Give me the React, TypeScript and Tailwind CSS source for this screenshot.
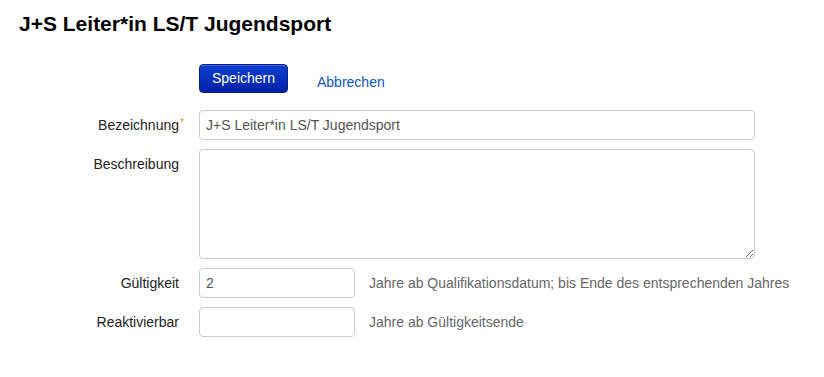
import React from "react";

const Row: React.FC<{ label: string; required?: boolean; children: React.ReactNode }> = ({
  label,
  required,
  children,
}) => (
  <div className="flex items-start">
    <label className="relative w-[160px] shrink-0 pt-[5px] text-right text-[14px] leading-[20px] text-[#222]">
      {label}
      {required && <span className="absolute -right-[5px] top-[3px] text-[10px] text-[#e8901a]">*</span>}
    </label>
    <div className="ml-[20px] flex items-start">{children}</div>
  </div>
);

export default function App() {
  return (
    <div className="min-h-screen bg-white px-[19px] pt-[12px] font-['Liberation_Sans',Arial,sans-serif]">
      <h1 className="text-[21px] font-bold leading-[24px] text-black">J+S Leiter*in LS/T Jugendsport</h1>

      <div className="mt-[28px] ml-[180px] flex items-center">
        <button className="h-[29px] w-[89px] rounded-[4px] border border-[#0a1f8a] bg-gradient-to-b from-[#1040d0] to-[#0020a8] text-[14px] text-white shadow-[inset_0_1px_0_rgba(255,255,255,0.2)]">
          Speichern
        </button>
        <a href="#" className="ml-[29px] mt-[7px] text-[14px] text-[#0a55c8]">
          Abbrechen
        </a>
      </div>

      <div className="mt-[17px] flex flex-col gap-[9px]">
        <Row label="Bezeichnung" required>
          <input
            defaultValue="J+S Leiter*in LS/T Jugendsport"
            className="h-[30px] w-[556px] rounded-[4px] border border-[#cccccc] px-[6px] text-[14px] text-[#555] outline-none"
          />
        </Row>
        <Row label="Beschreibung">
          <textarea className="block h-[110px] w-[556px] rounded-[4px] border border-[#cccccc] px-[6px] py-[4px] text-[14px] text-[#555] outline-none" />
        </Row>
        <Row label="Gültigkeit">
          <input
            defaultValue="2"
            className="h-[30px] w-[156px] rounded-[4px] border border-[#cccccc] px-[6px] text-[14px] text-[#555] outline-none"
          />
          <span className="ml-[14px] pt-[5px] text-[14px] leading-[20px] text-[#666]">
            Jahre ab Qualifikationsdatum; bis Ende des entsprechenden Jahres
          </span>
        </Row>
        <Row label="Reaktivierbar">
          <input className="h-[30px] w-[156px] rounded-[4px] border border-[#cccccc] px-[6px] text-[14px] text-[#555] outline-none" />
          <span className="ml-[14px] pt-[5px] text-[14px] leading-[20px] text-[#666]">Jahre ab Gültigkeitsende</span>
        </Row>
      </div>
    </div>
  );
}
